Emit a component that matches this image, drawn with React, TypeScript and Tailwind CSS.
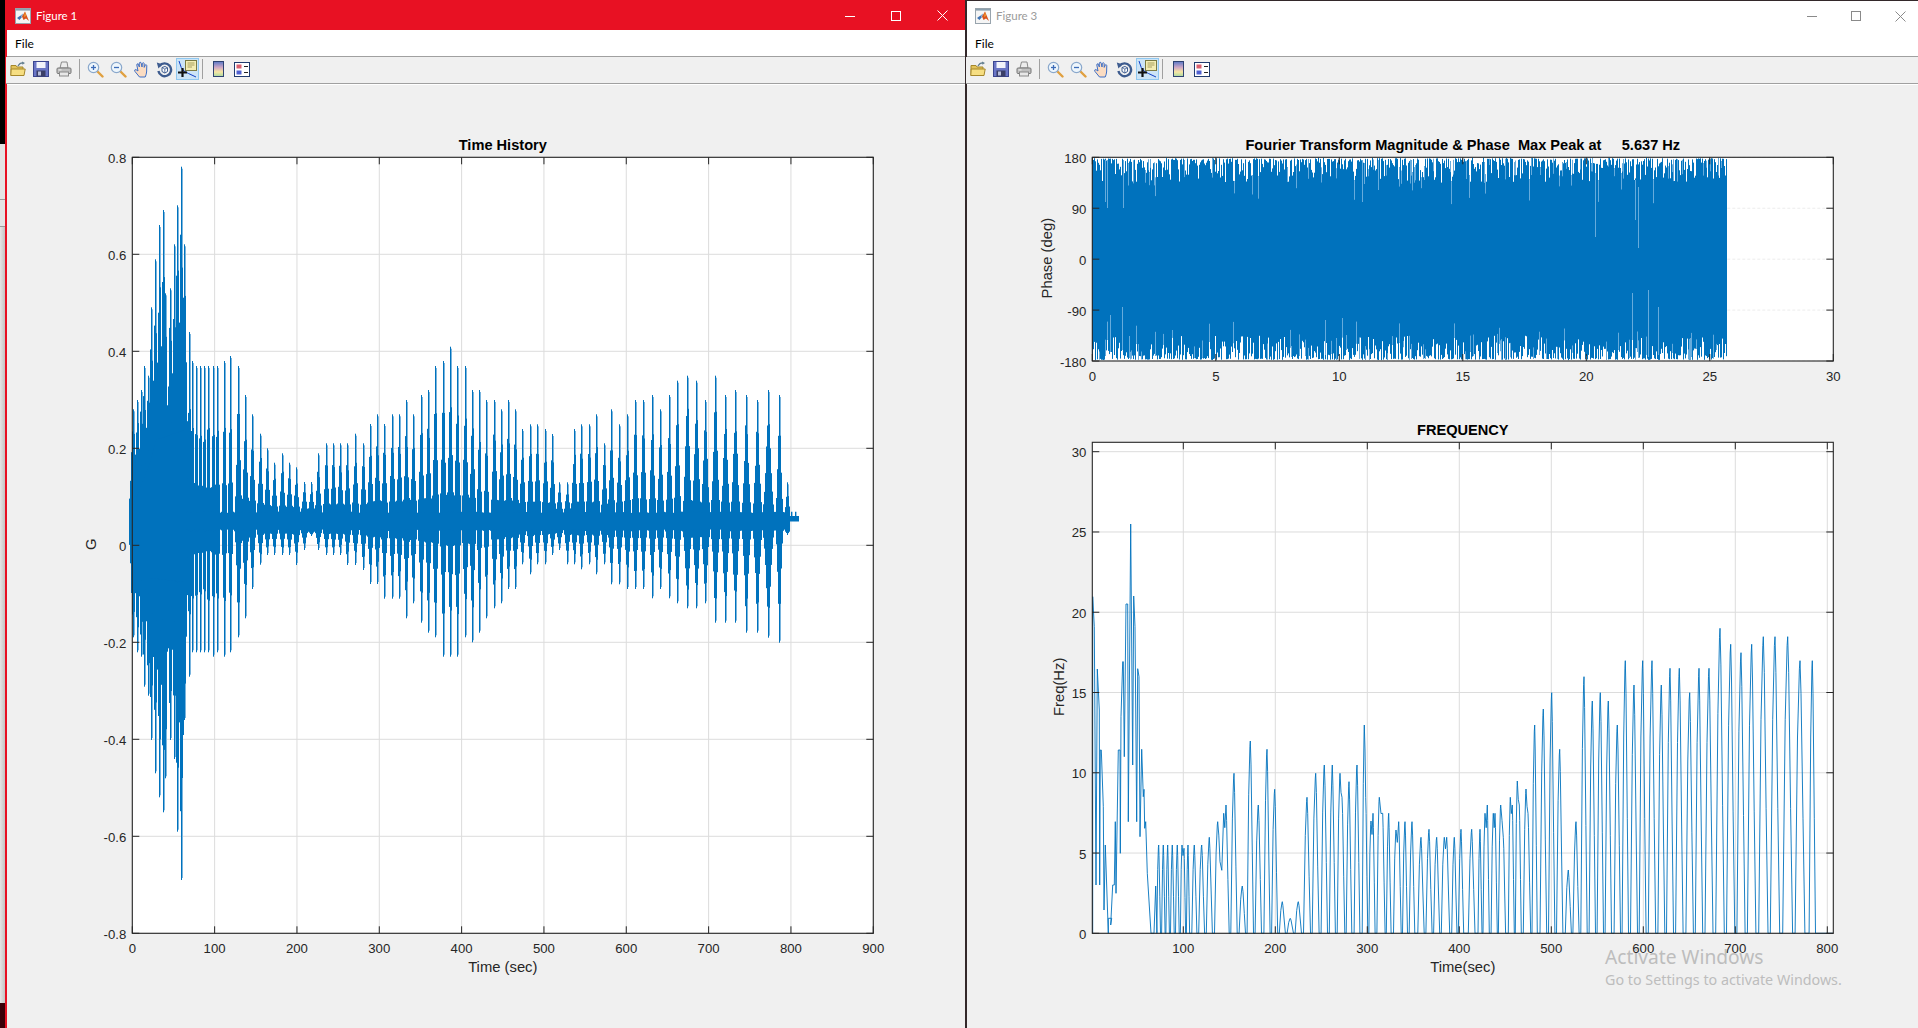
import type { ReactNode } from "react";

const BLUE = "#0072BD";
const INK = "#262626";

// seeded noise so the plots come out the same every run
const makeRand = (seed: number) => () => {
  seed = (seed + 0x6d2b79f5) | 0;
  let t = Math.imul(seed ^ (seed >>> 15), 1 | seed);
  t = (t + Math.imul(t ^ (t >>> 7), 61 | t)) ^ t;
  return ((t ^ (t >>> 14)) >>> 0) / 4294967296;
};

/* ---------- Time History data: [x, top, bottom] read off the reference ---------- */
const burstsA = [
  [160, 838, 232], [172, 810, 277], [183, 780, 290], [193, 708, 380], [203, 737, 407], [214, 532, 540],
  [226, 388, 640], [237, 285, 712], [248, 240, 757], [256, 490, 655], [270, 475, 540], [281, 343, 597],
  [292, 226, 815], [303, 110, 960], [313, 343, 480], [326, 606, 350], [337, 693, 277], [347, 708, 277],
  [360, 708, 277], [373, 708, 277], [385, 708, 277], [399, 708, 290], [412, 708, 277], [433, 693, 290],
  [451, 678, 277], [473, 708, 232], [494, 795, 175], [517, 853, 87], [539, 911, 14],
].map(([x, t, b]) => [80 + x / 3, 130 + t / 3, 560 + b / 3]);
const burstsB = [
  [561, 955, 1275], [583, 998, 1275], [605, 970, 1275], [628, 998, 1275], [649, 1012, 1305], [671, 1056, 1260],
  [693, 1056, 1218], [715, 970, 1260], [737, 940, 1275], [758, 940, 1275], [780, 940, 1275], [802, 940, 1305],
  [824, 911, 1305], [848, 940, 1320],
].map(([x, t, b]) => [80 + x / 3, 130 + t / 3, 130 + b / 3]);
const burstsC = [
  [869, 882, 72], [890, 853, 72], [913, 882, 116], [935, 853, 116], [956, 853, 116], [978, 810, 175],
  [999, 853, 130], [1022, 795, 188], [1045, 780, 218], [1066, 708, 232], [1088, 693, 290], [1109, 650, 290],
  [1131, 708, 290], [1154, 708, 232], [1175, 780, 247], [1197, 780, 218],
].map(([x, t, b]) => [80 + x / 3, 130 + t / 3, 560 + b / 3]);
const burstsD = [
  [17, 210, 865], [41, 210, 835], [62, 238, 820], [84, 210, 777], [106, 238, 777], [127, 297, 703],
  [150, 283, 733], [172, 283, 703], [194, 297, 703], [216, 312, 675], [238, 457, 660], [260, 457, 703],
  [282, 297, 703], [304, 283, 718], [326, 283, 703], [348, 253, 733], [371, 340, 703], [394, 238, 763],
  [417, 283, 763], [441, 253, 777], [465, 210, 777], [490, 210, 777], [515, 195, 805], [540, 238, 777],
  [566, 195, 805], [592, 152, 820], [620, 137, 835], [647, 152, 835], [676, 210, 820], [705, 137, 878],
  [735, 195, 878], [765, 180, 878], [798, 195, 908], [830, 210, 908], [863, 180, 923], [897, 195, 938],
  [921, 457, 615],
].map(([x, t, b]) => [480 + x / 3, 330 + t / 3, 330 + b / 3]);
const bursts = [...burstsA, ...burstsB, ...burstsC, ...burstsD];

const buildTimeHistory = () => {
  const rand = makeRand(7);
  let solid = "";
  let soft = "";
  // every lobe grows out of the steady band, so the valleys between lobes reach it
  const BAND_TOP = 512;
  const BAND_BOTTOM = 531;
  bursts.forEach(([x, top, bot], i) => {
    const prev = i > 0 ? x - bursts[i - 1][0] : 4;
    const next = i < bursts.length - 1 ? bursts[i + 1][0] - x : 4;
    const dense = x < 186;
    const n = dense ? 4 : Math.max(2, Math.min(5, Math.floor(Math.min(prev, next) / 2 - 0.5)));
    const cx = Math.round(x);
    for (let k = -n; k <= n; k++) {
      const f = Math.pow(1 - Math.abs(k) / (n + 1), dense ? 1.2 : 1.55);
      const j = k === 0 ? 1 : 0.9 + rand() * 0.18;
      const y1 = BAND_TOP - (BAND_TOP - top) * Math.min(1, f * j);
      const y2 = BAND_BOTTOM + (bot - BAND_BOTTOM) * Math.min(1, f * j);
      solid += `M${cx + k + 0.5} ${y1.toFixed(1)}V${y2.toFixed(1)}`;
    }
    soft += `M${cx + 1.5} ${(top + 2).toFixed(1)}V${(bot - 2).toFixed(1)}`;
  });
  let band = "";
  for (let x = 186; x < 787; x++) {
    band += `M${x + 0.5} ${(511.5 + rand() * 1.6).toFixed(1)}V${(529.5 + rand() * 2).toFixed(1)}`;
  }
  return { solid, soft, band };
};
const timeHistory = buildTimeHistory();

/* ---------- Phase data ---------- */
const buildPhase = () => {
  const rand = makeRand(21);
  let solid = "";
  let streaks = "";
  let a = 0;
  let b = 0;
  for (let x = 1092; x < 1727; x++) {
    a = a * 0.75 + rand() * 1.1;
    b = b * 0.75 + rand() * 1.1;
    const r1 = rand();
    const r2 = rand();
    const top = 157 + a * 0.7 + r1 * r1 * r1 * 24;
    const bot = 361 - b * 0.7 - r2 * r2 * r2 * 24;
    solid += `M${x + 0.5} ${top.toFixed(1)}V${bot.toFixed(1)}`;
    if (rand() < 0.12) streaks += `M${x + 0.5} ${top.toFixed(1)}v${(6 + rand() * 18).toFixed(1)}`;
    if (rand() < 0.12) streaks += `M${x + 0.5} ${bot.toFixed(1)}v${(-6 - rand() * 18).toFixed(1)}`;
  }
  const fixed = [
    [1105, 160, 202], [1107, 160, 208], [1123, 160, 208], [1362, 160, 202], [1595, 173, 237], [1638, 187, 248],
    [1635, 180, 220], [1648, 290, 357], [1632, 293, 340], [1122, 307, 350], [1110, 315, 352], [1325, 320, 355],
    [1658, 307, 355], [1378, 160, 190],
  ];
  fixed.forEach(([x, y1, y2]) => {
    streaks += `M${x + 0.5} ${y1}V${y2}`;
  });
  return { solid, streaks };
};
const phase = buildPhase();

/* ---------- Frequency data ---------- */
const freqHead = [
  [158, 1480], [158, 470], [163, 560], [168, 1335], [172, 687], [178, 810], [179, 1335], [181, 930], [184, 930],
  [190, 1100], [192, 1410], [196, 1215], [205, 1480], [205, 1435], [215, 1435], [212, 1455], [218, 1335], [223, 1335],
  [226, 1145], [228, 1360], [235, 930], [240, 930], [241, 1240], [243, 830], [248, 665], [250, 665], [253, 950],
  [258, 492], [263, 492], [265, 1145], [272, 252], [278, 975], [281, 468], [285, 560], [290, 1145], [293, 686],
  [297, 710], [300, 1190], [305, 928], [310, 1070], [312, 1048], [314, 1165], [317, 1145], [322, 1300], [333, 1480],
  [342, 1480], [347, 1338], [351, 1480],
].map(([x, y]) => [1040 + x / 3, 440 + y / 3]);
const freqPeaks = [
  ...[
    [356, 1215], [370, 1215], [383, 1215], [397, 1215], [412, 1215], [426, 1215], [432, 1225], [444, 1215], [463, 1215],
    [485, 1215], [508, 1192], [533, 1145], [540, 1265], [551, 1120], [558, 1095], [582, 1000], [607, 1338], [631, 903],
    [655, 1095], [681, 928], [704, 1048], [727, 1385], [751, 1435], [775, 1385], [801, 1072], [827, 1000], [853, 975],
    [877, 975], [900, 1000], [906, 1072], [927, 1025], [951, 975], [973, 855], [977, 1072], [993, 1143], [999, 1120],
    [1018, 1072], [1028, 1120], [1046, 1120], [1068, 1170], [1076, 1145], [1095, 1145], [1116, 1145], [1143, 1192],
    [1167, 1168], [1190, 1192], [1213, 1192], [1220, 1192], [1243, 1192], [1263, 1168],
  ].map(([x, y]) => [1040 + x / 3, 440 + y / 3]),
  ...[
    [5, 688], [30, 688], [45, 640], [52, 615], [70, 640], [75, 640], [92, 615], [100, 712], [121, 592], [127, 615],
    [142, 543], [148, 615], [168, 567], [174, 640], [194, 375], [220, 327], [245, 278], [269, 448], [295, 810], [318, 665],
    [342, 230], [367, 303], [391, 278], [415, 303], [442, 375], [466, 182], [492, 255], [518, 182], [546, 182], [574, 255],
    [600, 205], [628, 205], [659, 278], [687, 205], [717, 205], [750, 85], [782, 133], [813, 158], [845, 133], [880, 110],
    [915, 110], [953, 110], [990, 182], [1027, 182],
  ].map(([x, y]) => [1470 + x / 3, 600 + y / 3]),
];

const buildFreq = () => {
  const BASE = 933.3;
  const groups: number[][][] = [];
  freqPeaks.forEach((p, i) => {
    if (i > 0 && p[0] - freqPeaks[i - 1][0] < 3.7) groups[groups.length - 1].push(p);
    else groups.push([p]);
  });
  const pts: number[][] = [...freqHead];
  groups.forEach((g, i) => {
    const first = g[0];
    const last = g[g.length - 1];
    const gapL = i > 0 ? first[0] - groups[i - 1][groups[i - 1].length - 1][0] : 5;
    const gapR = i < groups.length - 1 ? groups[i + 1][0][0] - last[0] : 8;
    const w = Math.min(gapL * 0.4, gapR * 0.4, 5);
    const h = (p: number[], k: number) => BASE - (BASE - p[1]) * k;
    pts.push([first[0] - w, BASE], [first[0] - w * 0.5, h(first, 0.72)], [first[0] - w * 0.12, h(first, 0.97)]);
    g.forEach((p, j) => {
      pts.push(p);
      if (j < g.length - 1) pts.push([(p[0] + g[j + 1][0]) / 2, h(p, 0.88)]);
    });
    pts.push([last[0] + w * 0.2, h(last, 0.88)], [last[0] + w * 0.6, h(last, 0.42)], [last[0] + w, BASE]);
  });
  pts.push([1833, BASE]);
  return pts.map(([x, y]) => `${x.toFixed(1)},${y.toFixed(1)}`).join(" ");
};
const freqLine = buildFreq();

/* ---------- Axes ---------- */
type Tick = { at: number; label: string };
type AxesProps = {
  left: number;
  right: number;
  top: number;
  bottom: number;
  xTicks: Tick[];
  yTicks: Tick[];
  grid?: "full" | "faint";
  title: string;
  titleY: number;
  xLabel?: string;
  yLabel: string;
  yLabelX: number;
  children: ReactNode;
};

const Axes = ({ left, right, top, bottom, xTicks, yTicks, grid = "full", title, titleY, xLabel, yLabel, yLabelX, children }: AxesProps) => {
  const cx = (left + right) / 2;
  const cy = (top + bottom) / 2;
  return (
    <g>
      <rect x={left} y={top} width={right - left} height={bottom - top} fill="#fff" />
      {grid === "full" &&
        xTicks.map((t) => <line key={t.label} x1={t.at} x2={t.at} y1={top} y2={bottom} stroke="#dcdcdc" strokeWidth="1" />)}
      {grid === "full"
        ? yTicks.map((t) => <line key={t.label} x1={left} x2={right} y1={t.at} y2={t.at} stroke="#dcdcdc" strokeWidth="1" />)
        : yTicks.map((t) => (
            <line key={t.label} x1={left} x2={right} y1={t.at} y2={t.at} stroke="#ececec" strokeWidth="1" strokeDasharray="3 2" />
          ))}
      {children}
      <rect x={left} y={top} width={right - left} height={bottom - top} fill="none" stroke={INK} strokeWidth="1.1" />
      {xTicks.map((t) => (
        <g key={t.label}>
          <line x1={t.at} x2={t.at} y1={top} y2={top + 7} stroke={INK} />
          <line x1={t.at} x2={t.at} y1={bottom} y2={bottom - 7} stroke={INK} />
          <text x={t.at} y={bottom + 20} textAnchor="middle" fill={INK} className="text-[13.2px]">
            {t.label}
          </text>
        </g>
      ))}
      {yTicks.map((t) => (
        <g key={t.label}>
          <line x1={left} x2={left + 7} y1={t.at} y2={t.at} stroke={INK} />
          <line x1={right} x2={right - 7} y1={t.at} y2={t.at} stroke={INK} />
          <text x={left - 6} y={t.at + 5.5} textAnchor="end" fill={INK} className="text-[13.2px]">
            {t.label}
          </text>
        </g>
      ))}
      <text x={cx} y={titleY} textAnchor="middle" fill="#000" className="text-[14.6px] font-bold whitespace-pre">
        {title}
      </text>
      {xLabel && (
        <text x={cx} y={972} textAnchor="middle" fill={INK} className="text-[14.8px]">
          {xLabel}
        </text>
      )}
      <text transform={`translate(${yLabelX} ${cy - 1}) rotate(-90)`} textAnchor="middle" fill={INK} className="text-[14.8px]">
        {yLabel}
      </text>
    </g>
  );
};

/* ---------- Toolbar icons ---------- */
const MatlabLogo = () => (
  <svg width="16" height="16" viewBox="0 0 16 16" className="shrink-0">
    <rect x="0.5" y="0.5" width="15" height="15" fill="#f5f5f5" stroke="#98a4ad" />
    <rect x="1" y="1" width="14" height="1.6" fill="#8ba0ae" />
    <path d="M2 10 L5.5 7.5 L7 9 L4.5 12 Z" fill="#3d72b4" />
    <path d="M5.5 7.5 L8 5.5 L7.5 9.5 Z" fill="#7aa3cf" />
    <path d="M7 8.5 L10 3.5 L14 13 L11 10.5 L8.5 12 Z" fill="#d9541e" />
    <path d="M10 3.5 L11 8 L9 9 Z" fill="#f0a030" />
  </svg>
);

const FolderIcon = () => (
  <svg width="16" height="16" viewBox="0 0 16 16">
    <path d="M1 4.5 H6 L7 6 H13 V14.5 H1 Z" fill="#e2c35a" stroke="#a5872b" />
    <path d="M0.8 14.5 L1.2 8 H15.2 L14 14.5 Z" fill="#f6de82" stroke="#a5872b" />
    <path d="M8 5 Q10 1.6 13 2" fill="none" stroke="#5f7c8e" strokeWidth="1.2" />
    <path d="M12 0.6 L15 2 L12.4 3.8 Z" fill="#5f7c8e" />
  </svg>
);

const SaveIcon = () => (
  <svg width="16" height="16" viewBox="0 0 16 16">
    <rect x="0.5" y="0.5" width="15" height="15" fill="#6a76c6" stroke="#3a4590" />
    <rect x="3.5" y="1" width="9" height="6" fill="#f2f4fb" />
    <rect x="3.5" y="9.5" width="9" height="6" fill="#3a3e66" />
    <rect x="5" y="10.5" width="3" height="4" fill="#b9bfdc" />
  </svg>
);

const PrintIcon = () => (
  <svg width="16" height="16" viewBox="0 0 16 16">
    <path d="M4 7 L5.5 1 H11 L12 7 Z" fill="#ececec" stroke="#8a8a8a" />
    <rect x="1" y="7" width="14" height="5.5" rx="1" fill="#c0c0c0" stroke="#777" />
    <rect x="3.5" y="11" width="9" height="4" fill="#e8e8e8" stroke="#8a8a8a" />
    <rect x="2.5" y="8.4" width="3" height="1" fill="#efefef" />
  </svg>
);

const LensIcon = ({ plus }: { plus?: boolean }) => (
  <svg width="17" height="17" viewBox="0 0 17 17">
    <line x1="10" y1="10" x2="15.5" y2="15.5" stroke="#e0a040" strokeWidth="2.4" strokeLinecap="round" />
    <circle cx="6.5" cy="6.5" r="5.2" fill="#eef6fc" stroke="#8aa8cc" strokeWidth="1.2" />
    <line x1="4" y1="6.5" x2="9" y2="6.5" stroke="#3c6cb8" strokeWidth="1.3" />
    {plus && <line x1="6.5" y1="4" x2="6.5" y2="9" stroke="#3c6cb8" strokeWidth="1.3" />}
  </svg>
);

const HandIcon = () => (
  <svg width="17" height="17" viewBox="0 0 17 17">
    <path
      d="M6.5 16 L2 10.5 Q1 8.5 2.8 8.5 L5 10 L3.8 4 Q3.8 2.6 5 2.8 L6.4 6 L6.2 2 Q7 0.6 8 1.6 L9 6 L9.4 2.2 Q10.4 1.2 11.2 2.4 L11.2 6.4 L12.4 3.8 Q13.6 3.4 13.8 4.6 L13.6 11 Q13.2 14 12.2 16 Z"
      fill="#fbdcc2"
      stroke="#3d6fc6"
      strokeWidth="1"
    />
  </svg>
);

const RotateIcon = () => (
  <svg width="17" height="17" viewBox="0 0 17 17">
    <path d="M3.5 5 A6.4 6.4 0 1 1 2.4 10" fill="none" stroke="#3e5c8f" strokeWidth="2.4" />
    <path d="M0.8 1.6 L6.4 3.2 L2.4 7.4 Z" fill="#3e5c8f" />
    <path d="M6 6.5 L9 5.5 L11.5 6.8 V10.5 L8.8 12 L6 10.5 Z" fill="#fff" stroke="#3e5c8f" />
    <path d="M6 6.5 L8.8 8 L11.5 6.8 M8.8 8 V12" fill="none" stroke="#3e5c8f" strokeWidth="0.8" />
  </svg>
);

const CursorIcon = () => (
  <svg width="20" height="18" viewBox="0 0 20 18">
    <path d="M1 1 Q3 9 6 11 T18 17" fill="none" stroke="#1240c8" strokeWidth="1" />
    <rect x="7.5" y="0.5" width="11" height="10" fill="#f4edb2" stroke="#7b7b42" />
    <path d="M9.5 3 H16.5 M9.5 5 H16.5 M9.5 7 H14" stroke="#a8a060" strokeWidth="1" />
    <path d="M4.5 8 V17 M0 12.5 H9" stroke="#111" strokeWidth="2.2" />
  </svg>
);

const ColorbarIcon = () => (
  <svg width="11" height="16" viewBox="0 0 11 16">
    <defs>
      <linearGradient id="colorbar-fill" x1="0" y1="0" x2="0" y2="1">
        <stop offset="0" stopColor="#5a78c8" />
        <stop offset="0.4" stopColor="#d0a8c4" />
        <stop offset="0.7" stopColor="#f6e6a2" />
        <stop offset="1" stopColor="#a6d8a4" />
      </linearGradient>
    </defs>
    <rect x="0.5" y="0.5" width="10" height="15" fill="url(#colorbar-fill)" stroke="#2e4272" />
  </svg>
);

const LegendIcon = () => (
  <svg width="16" height="15" viewBox="0 0 16 15">
    <rect x="0.5" y="0.5" width="15" height="14" fill="#fff" stroke="#1f3a6e" />
    <rect x="2.5" y="2.5" width="5" height="4" fill="#d96070" />
    <rect x="2.5" y="8.5" width="5" height="4" fill="#5060d0" />
    <path d="M10 4.5 H14 M10 10.5 H14" stroke="#222" />
  </svg>
);

const ToolButton = ({ children, active }: { children: ReactNode; active?: boolean }) => (
  <div
    className={
      active
        ? "w-[23px] h-[22px] flex items-center justify-center bg-[#cce4f7] border border-[#90c8f0]"
        : "w-[23px] h-[22px] flex items-center justify-center"
    }
  >
    {children}
  </div>
);

const Toolbar = () => (
  <div className="h-[24px] pb-[2px] border-b border-[#a0a0a0] box-content bg-[#f0f0f0] flex items-center -ml-px">
    <ToolButton><FolderIcon /></ToolButton>
    <ToolButton><SaveIcon /></ToolButton>
    <ToolButton><PrintIcon /></ToolButton>
    <div className="w-px h-5 bg-[#a0a0a0] ml-1 mr-1" />
    <ToolButton><LensIcon plus /></ToolButton>
    <ToolButton><LensIcon /></ToolButton>
    <ToolButton><HandIcon /></ToolButton>
    <ToolButton><RotateIcon /></ToolButton>
    <ToolButton active><CursorIcon /></ToolButton>
    <div className="w-px h-5 bg-[#a0a0a0] ml-[3px] mr-1" />
    <ToolButton><ColorbarIcon /></ToolButton>
    <ToolButton><LegendIcon /></ToolButton>
  </div>
);

const WindowControls = ({ active }: { active?: boolean }) => {
  const color = active ? "#ffffff" : "#8a8a8a";
  const cell = active ? "w-[46px] flex items-center justify-center" : "w-[44px] flex items-center justify-center";
  return (
    <div className="flex ml-auto">
      <div className={cell}>
        <svg width="10" height="10" viewBox="0 0 10 10"><line x1="0" y1="5.5" x2="10" y2="5.5" stroke={color} /></svg>
      </div>
      <div className={cell}>
        <svg width="10" height="10" viewBox="0 0 10 10"><rect x="0.5" y="0.5" width="9" height="9" fill="none" stroke={color} /></svg>
      </div>
      <div className={cell}>
        <svg width="11" height="11" viewBox="0 0 11 11"><path d="M0.5 0.5 L10.5 10.5 M10.5 0.5 L0.5 10.5" stroke={color} /></svg>
      </div>
    </div>
  );
};

const Figure = ({ title, active, originX, width, className, children }: { title: string; active?: boolean; originX: number; width: number; className: string; children: ReactNode }) => (
  <div className={`relative flex flex-col shrink-0 h-full bg-[#f0f0f0] ${className}`}>
    <div className={active ? "h-[31px] flex items-center pl-2 bg-[#e81123] text-white" : "h-[30px] flex items-center pl-2 bg-white text-[#9b9b9b]"}>
      <MatlabLogo />
      <span className={active ? "ml-[5px] pt-px text-[11.5px] font-['Lato',sans-serif]" : "ml-[5px] text-[11.5px] font-['Lato',sans-serif]"}>{title}</span>
      <WindowControls active={active} />
    </div>
    <div className="h-[25px] box-content border-b border-[#a0a0a0] bg-white flex items-center pl-2 pt-px -mt-px text-[12px] text-black font-['Lato',sans-serif]">
      File
    </div>
    <Toolbar />
    <div className="flex-1 border-t border-white bg-[#f0f0f0]">
      <svg viewBox={`${originX} 85 ${width} 943`} width={width} height={943} className="block">
        {children}
      </svg>
    </div>
  </div>
);

const range = (from: number, step: number, labels: (string | number)[]): Tick[] =>
  labels.map((l, i) => ({ at: from + step * i, label: String(l) }));

const App = () => {
  return (
    <div className="relative w-[1918px] h-[1028px] overflow-hidden flex bg-black font-['Liberation_Sans',sans-serif]">
      {/* desktop behind the figures */}
      <div className="w-[5px] shrink-0 flex flex-col">
        <div className="h-[144px] bg-black" />
        <div className="h-[56px] bg-[#e4e4e4] border-b border-[#9a9a9a]" />
        <div className="h-[27px] bg-[#e4e4e4] border-b border-[#9a9a9a]" />
        <div className="flex-1 bg-linear-to-r from-[#e6e6e6] to-[#c4c4c4]" />
        <div className="h-[25px] bg-[#3a0008]" />
      </div>

      {/* Figure 1 */}
      <Figure title="Figure 1" active originX={7} width={958} className="w-[960px] border-l-2 border-[#e81123]">
        <Axes
          left={132.3}
          right={873.3}
          top={157.3}
          bottom={933.3}
          title="Time History"
          titleY={149.5}
          xLabel="Time (sec)"
          yLabel="G"
          yLabelX={96}
          xTicks={range(132.3, 82.33, [0, 100, 200, 300, 400, 500, 600, 700, 800, 900])}
          yTicks={range(157.3, 97, ["0.8", "0.6", "0.4", "0.2", "0", "-0.2", "-0.4", "-0.6", "-0.8"])}
        >
          <path d={timeHistory.soft} stroke="#7ab5de" strokeWidth="1" fill="none" />
          <path d={timeHistory.solid} stroke={BLUE} strokeWidth="1" fill="none" />
          <path d={timeHistory.band} stroke={BLUE} strokeWidth="1" fill="none" />
          <polygon points="132.5,507 150,463 156,440 184,430 184,582 150,578 132.5,562" fill={BLUE} />
          <rect x="787" y="516" width="12" height="5.5" fill={BLUE} />
          <path d="M791.7 511.7V517M795.7 511.7V517" stroke={BLUE} strokeWidth="1.4" />
        </Axes>
      </Figure>

      {/* Figure 3 */}
      <Figure title="Figure 3" originX={967} width={955} className="w-[957px] border-l-2 border-t border-[#33282a]">
        <Axes
          left={1092.3}
          right={1833.3}
          top={157.3}
          bottom={361}
          grid="faint"
          title="Fourier Transform Magnitude & Phase  Max Peak at     5.637 Hz"
          titleY={149.5}
          yLabel="Phase (deg)"
          yLabelX={1052}
          xTicks={range(1092.3, 123.5, [0, 5, 10, 15, 20, 25, 30])}
          yTicks={range(157.3, 50.93, [180, 90, 0, -90, -180])}
        >
          <path d={phase.solid} stroke={BLUE} strokeWidth="1" fill="none" />
          <path d={phase.streaks} stroke="#66abdc" strokeWidth="1" fill="none" />
        </Axes>
        <Axes
          left={1092.3}
          right={1833.3}
          top={442.3}
          bottom={933.3}
          title="FREQUENCY"
          titleY={434.5}
          xLabel="Time(sec)"
          yLabel="Freq(Hz)"
          yLabelX={1064}
          xTicks={range(1183.3, 92, [100, 200, 300, 400, 500, 600, 700, 800])}
          yTicks={range(451.7, 80.27, [30, 25, 20, 15, 10, 5, 0])}
        >
          <polyline points={freqLine} fill="none" stroke={BLUE} strokeWidth="0.9" strokeLinejoin="round" />
        </Axes>
        <div className="absolute inset-y-0 left-0 w-2 bg-linear-to-r from-black/15 to-transparent" />
      </Figure>

      {/* Windows activation watermark */}
      <div className="absolute left-[1605px] top-[943px] pointer-events-none text-[#bdbdbd] font-['Noto_Sans',sans-serif]">
        <div className="text-[19.2px] leading-[27px]">Activate Windows</div>
        <div className="text-[14.3px] leading-[19px]">Go to Settings to activate Windows.</div>
      </div>
    </div>
  );
};

export default App;
